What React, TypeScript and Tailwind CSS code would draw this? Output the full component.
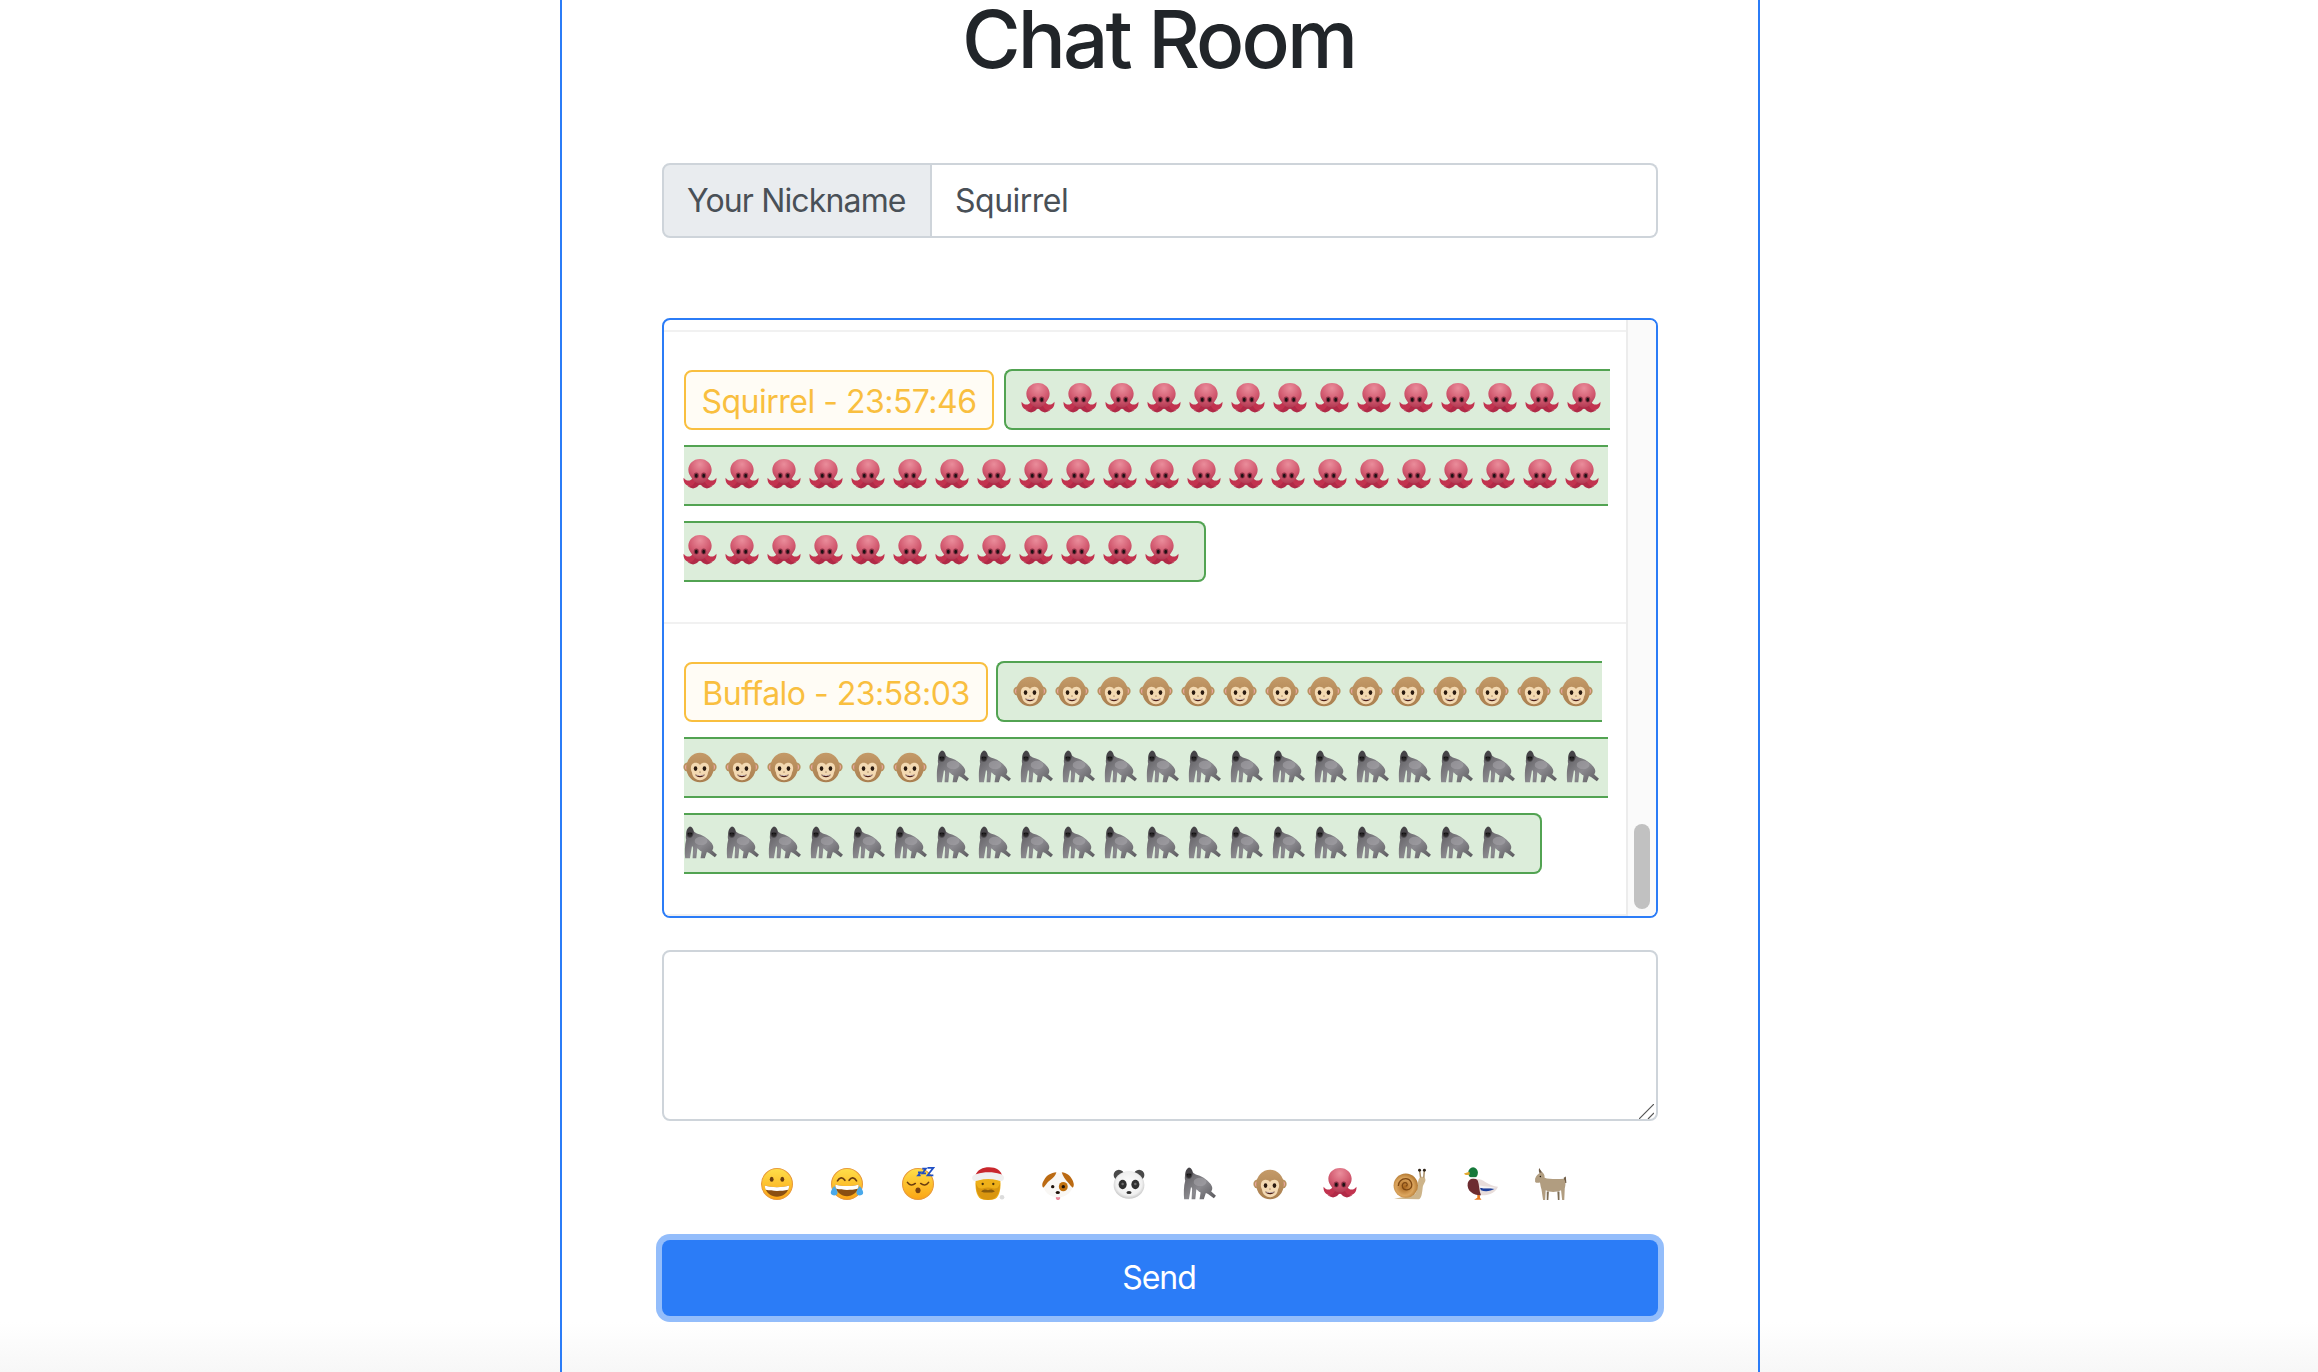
const Octopus = () => (
  <svg viewBox="0 0 32 32" className="block w-8 h-8">
    <defs>
      <radialGradient id="octo" cx="50%" cy="22%" r="78%">
        <stop offset="0%" stopColor="#ea8d9b" />
        <stop offset="60%" stopColor="#d25a70" />
        <stop offset="100%" stopColor="#b23a53" />
      </radialGradient>
    </defs>
    <path d="M9 19 C7 22 3 22 0.5 18.5 C0 23 3 27 8 26.5 C11 26 13 24.5 14 22 Z" fill="#c2334f" />
    <path d="M23 19 C25 22 29 22 31.5 18.5 C32 23 29 27 24 26.5 C21 26 19 24.5 18 22 Z" fill="#c2334f" />
    <path d="M12 21 C11 25 7 28 4 26 C7 29.5 12 29.5 14.5 26 C15.5 25 16.5 25 17.5 26 C20 29.5 25 29.5 28 26 C25 28 21 25 20 21 Z" fill="#b02a47" />
    <path d="M16 0.8 C22.5 0.8 27 5.5 27 11 C27 14.5 25.5 16.5 24 18.5 C22.5 21 20 24 16 24 C12 24 9.5 21 8 18.5 C6.5 16.5 5 14.5 5 11 C5 5.5 9.5 0.8 16 0.8 Z" fill="url(#octo)" />
    <ellipse cx="12.5" cy="16.5" rx="2.4" ry="2.8" fill="#8d3346" />
    <ellipse cx="19.5" cy="16.5" rx="2.4" ry="2.8" fill="#8d3346" />
    <ellipse cx="12.5" cy="16.8" rx="1.3" ry="1.9" fill="#1c1114" />
    <ellipse cx="19.5" cy="16.8" rx="1.3" ry="1.9" fill="#1c1114" />
  </svg>
);

const Monkey = () => (
  <svg viewBox="0 0 32 32" className="block w-8 h-8">
    <defs>
      <linearGradient id="mky" x1="0" y1="0" x2="0" y2="1">
        <stop offset="0%" stopColor="#c49a68" />
        <stop offset="100%" stopColor="#a97f4f" />
      </linearGradient>
    </defs>
    <circle cx="4.5" cy="16" r="4.2" fill="#b8925f" />
    <circle cx="27.5" cy="16" r="4.2" fill="#b8925f" />
    <circle cx="4.5" cy="16" r="2.7" fill="#eba7a0" />
    <circle cx="27.5" cy="16" r="2.7" fill="#eba7a0" />
    <ellipse cx="16" cy="16.5" rx="13" ry="14" fill="url(#mky)" />
    <path d="M16 14 C18 11 24 11 24.5 16 C25 19 24 20 23.5 21.5 C23 26 19.5 28.5 16 28.5 C12.5 28.5 9 26 8.5 21.5 C8 20 7 19 7.5 16 C8 11 14 11 16 14 Z" fill="#f3d9b2" />
    <ellipse cx="11.8" cy="17.5" rx="1.7" ry="2.2" fill="#2a1a10" />
    <ellipse cx="20.2" cy="17.5" rx="1.7" ry="2.2" fill="#2a1a10" />
    <path d="M15 20.5 h2 l-1 1 z" fill="#7d5a38" />
    <path d="M11.5 23 C14 24 18 24 20.5 23 C19.5 26.5 12.5 26.5 11.5 23 Z" fill="#4a1c14" />
    <path d="M12.3 23.3 C14.5 24 17.5 24 19.7 23.3 L19.4 24 C17 24.5 15 24.5 12.6 24 Z" fill="#ffffff" />
  </svg>
);

const Gorilla = () => (
  <svg viewBox="0 0 32 32" className="block w-8 h-8">
    <defs>
      <linearGradient id="gor" x1="0" y1="0" x2="1" y2="1">
        <stop offset="0%" stopColor="#59575b" />
        <stop offset="55%" stopColor="#8b8a8f" />
        <stop offset="100%" stopColor="#57565a" />
      </linearGradient>
    </defs>
    <path d="M7 2 C9 4 11 6 13 7 C18 8 23 11 27 16 C29 19 29 21 27.5 23 L32 27 L30 29.5 L24.5 25.5 L22.5 24.5 L20.5 30.5 L16.5 30.5 L17.5 24 C15.5 23 14.5 22 13.5 21 L12.5 30.5 L9 30.5 L9.5 20.5 L8.5 18.5 L6.5 30.5 L2 30.5 C1.5 25 1.5 18 3 13 C2 9 3 5 7 2 Z" fill="url(#gor)" />
    <ellipse cx="17" cy="14" rx="6" ry="4" fill="#a3a2a7" opacity="0.6" />
    <path d="M6.5 0.5 C9 1 10.5 4 10 6.5 C9.5 9.5 8.5 11 6.5 11 C4.5 11 3 9 3 6.5 C3 4 4.5 1.5 6.5 0.5 Z" fill="#464448" />
    <path d="M4 6.5 C5 5.5 8 5.5 9 6.5 C9 8.5 8 10 6.5 10 C5 10 4 8.5 4 6.5 Z" fill="#2b292a" />
    <circle cx="5.4" cy="7.2" r="0.6" fill="#050505" />
    <circle cx="7.6" cy="7.2" r="0.6" fill="#050505" />
  </svg>
);

const Face = ({ children }: { children: React.ReactNode }) => (
  <svg viewBox="0 0 32 32" className="block w-8 h-8">
    <defs>
      <linearGradient id="face" x1="0" y1="0" x2="0" y2="1">
        <stop offset="0%" stopColor="#ffdf4a" />
        <stop offset="100%" stopColor="#fba414" />
      </linearGradient>
    </defs>
    <circle cx="16" cy="16" r="14.6" fill="url(#face)" stroke="#e89a3b" strokeWidth="1" />
    {children}
  </svg>
);

const Grin = () => (
  <Face>
    <ellipse cx="11" cy="11.5" rx="1.8" ry="2.4" fill="#6b3d10" />
    <ellipse cx="21" cy="11.5" rx="1.8" ry="2.4" fill="#6b3d10" />
    <path d="M4.5 17.5 C11 19.5 21 19.5 27.5 17.5 C27 25 21 28 16 28 C11 28 5 25 4.5 17.5 Z" fill="#8a4f12" />
    <path d="M4.5 17.5 C11 19.5 21 19.5 27.5 17.5 C27.4 19.5 27 21 26.5 21.5 C20 23 12 23 5.5 21.5 C5 21 4.6 19.5 4.5 17.5 Z" fill="#ffffff" />
  </Face>
);

const Joy = () => (
  <svg viewBox="0 0 32 32" className="block w-8 h-8">
    <circle cx="16" cy="16" r="14.6" fill="url(#face)" stroke="#e89a3b" strokeWidth="1" />
    <path d="M7 13 C9 9.5 12 9.5 14 12.5 M18 12.5 C20 9.5 23 9.5 25 13" fill="none" stroke="#6b3d10" strokeWidth="1.6" strokeLinecap="round" />
    <path d="M5 16.5 C11 18.5 21 18.5 27 16.5 C27 24 21 27.5 16 27.5 C11 27.5 5 24 5 16.5 Z" fill="#8a4f12" />
    <path d="M5 16.5 C11 18.5 21 18.5 27 16.5 C27 18.5 26.5 20 26 20.5 C20 22 12 22 6 20.5 C5.5 20 5 18.5 5 16.5 Z" fill="#ffffff" />
    <path d="M4 18 C6 21 7.5 23 7 25 C6.5 27 2.5 27.5 1 25.5 C0 23.5 2 20.5 4 18 Z" fill="#4aa9ea" />
    <path d="M28 18 C26 21 24.5 23 25 25 C25.5 27 29.5 27.5 31 25.5 C32 23.5 30 20.5 28 18 Z" fill="#4aa9ea" />
  </svg>
);

const Sleepy = () => (
  <Face>
    <path d="M6 14.5 C8 17.5 11 17.5 13.5 15.5 M18.5 15.5 C21 17.5 24 17.5 26 14.5" fill="none" stroke="#6b3d10" strokeWidth="1.5" strokeLinecap="round" />
    <ellipse cx="16" cy="22" rx="2.4" ry="2.8" fill="#7a4310" />
    <path d="M16 5 h2.5 l-2.5 3 h2.5 M20 1.5 h3.5 l-3.5 4.5 h3.5 M25 0.8 h5.5 l-5.5 7 h5.5" fill="none" stroke="#1f4fc4" strokeWidth="1.6" />
  </Face>
);

const Santa = () => (
  <svg viewBox="0 0 32 32" className="block w-8 h-8">
    <circle cx="29.2" cy="28.5" r="2.2" fill="#dcdcdc" />
    <path d="M4.5 11 C3.5 20 5 27 9 30 C12 31.5 20 31.5 23 30 C27 27 28.5 20 27.5 11 Z" fill="#eeb019" />
    <path d="M4.5 15 C5 24 7 31 16 31 C25 31 27 24 27.5 15 C26 20 23.5 21 20.5 20 C18 19 14 19 11.5 20 C8.5 21 6 20 4.5 15 Z" fill="#d9960f" />
    <path d="M9.5 23 C12 20.5 14.5 21 16 22 C17.5 21 20 20.5 22.5 23 C20 24.5 12 24.5 9.5 23 Z" fill="#8a5d0c" />
    <circle cx="11" cy="16" r="1.1" fill="#4b3208" />
    <circle cx="21" cy="16" r="1.1" fill="#4b3208" />
    <path d="M4 8 C6 2.5 11 0.3 17 0.3 C24 0.3 28 3.5 29.5 8.5 Z" fill="#c9272d" />
    <path d="M1 10 C1 8 3 7 5.5 6.5 C12 4.5 21 4.5 27.5 6.5 C30 7 31.5 8.5 31 11 C30.5 13.5 27.5 13.5 25 12.5 C19 11 13 11 7.5 12.5 C4.5 13.8 1 13.5 1 10 Z" fill="#f0f0f0" />
  </svg>
);

const Dog = () => (
  <svg viewBox="0 0 32 32" className="block w-8 h-8">
    <path d="M14 26 h4 v3.5 c0 2.2 -4 2.2 -4 0 z" fill="#ec8a9c" />
    <ellipse cx="16" cy="17" rx="13.8" ry="11.5" fill="#f9f7f4" />
    <path d="M14.5 5 C9.5 5.5 5 8 3 12 C1 15 0.5 17.5 2 19.5 C4 18 5.5 14.5 8.5 12.5 C11.5 10.5 13.5 8.5 14.5 5 Z" fill="#bb6a12" />
    <path d="M19.5 5 C24 5.5 27.5 8 29.5 12 C31 15 31.5 17.5 30 19.5 C28 18 27 16 25.5 14.5 C23 12 20.5 8.5 19.5 5 Z" fill="#bb6a12" />
    <ellipse cx="21" cy="18.5" rx="4.2" ry="4.4" fill="#c0700e" />
    <circle cx="11" cy="18.5" r="1.6" fill="#1e1209" />
    <circle cx="21" cy="18.5" r="1.6" fill="#1e1209" />
    <ellipse cx="15.8" cy="24" rx="2" ry="1.5" fill="#1e1209" />
  </svg>
);

const Panda = () => (
  <svg viewBox="0 0 32 32" className="block w-8 h-8">
    <defs>
      <radialGradient id="pan" cx="50%" cy="45%" r="60%">
        <stop offset="0%" stopColor="#ffffff" />
        <stop offset="70%" stopColor="#f0f0f0" />
        <stop offset="100%" stopColor="#b5b5b5" />
      </radialGradient>
    </defs>
    <circle cx="6.5" cy="7.5" r="5" fill="#4a4a4a" />
    <circle cx="25.5" cy="7.5" r="5" fill="#4a4a4a" />
    <ellipse cx="16" cy="17" rx="14.5" ry="13" fill="url(#pan)" />
    <ellipse cx="10" cy="16.5" rx="3.8" ry="4.4" fill="#303030" />
    <ellipse cx="22" cy="16.5" rx="3.8" ry="4.4" fill="#303030" />
    <circle cx="10" cy="16" r="1.2" fill="#6e6e6e" />
    <circle cx="22" cy="16" r="1.2" fill="#6e6e6e" />
    <ellipse cx="16" cy="24" rx="2.4" ry="1.5" fill="#303030" />
  </svg>
);

const Snail = () => (
  <svg viewBox="0 0 32 32" className="block w-8 h-8">
    <defs>
      <radialGradient id="shell" cx="45%" cy="55%" r="60%">
        <stop offset="0%" stopColor="#a9651c" />
        <stop offset="60%" stopColor="#dca65f" />
        <stop offset="100%" stopColor="#a86d26" />
      </radialGradient>
    </defs>
    <path d="M1 30 C7 28 18 29 21 25 C24 21 23 13 24.5 11 C26 8.5 30 8.5 30.5 11.5 C31 14 28.5 16 28 19 C27.5 24 27 30 24 30.5 Z" fill="#cdb48a" />
    <path d="M26 10 L25 3 M29 10 L29.5 3" stroke="#a58a62" strokeWidth="1.4" />
    <circle cx="25" cy="3" r="1.4" fill="#2c2117" />
    <circle cx="29.6" cy="3" r="1.4" fill="#2c2117" />
    <circle cx="12" cy="17.5" r="11.5" fill="url(#shell)" />
    <path d="M12 18 C13.5 18 14 16 12.5 15 C10 14 8 16.5 9 19 C10 22 15 22.5 17 19.5 C19 15.5 16 11 12 11 C8 11 5 14 5 18" fill="none" stroke="#7e4813" strokeWidth="1.2" />
  </svg>
);

const Duck = () => (
  <svg viewBox="0 0 32 32" className="block w-8 h-8">
    <path d="M12.5 25 l0 4 -3 1.8 h7 l-1.5 -1.8 0 -4 z" fill="#ea7a1e" />
    <path d="M4 14 C10 10 16 11 20 14 C24 16.5 28 18 32 18.5 C30 24 24 27 15 26.5 C8 26 3 21 4 14 Z" fill="#e8dddb" />
    <path d="M3.5 15 C5 10 11 9.5 13 13 C14.5 17 14 22 16 26.5 C10 27 2 23 3.5 15 Z" fill="#6d2c30" />
    <path d="M15 19.5 C19 20.5 24 19.5 29 20.5 C25 23 20 23.5 16 22 Z" fill="#1c3f9c" />
    <path d="M15 17.5 C20 18.5 25 18.5 29 19.5 L29 20.5 C24 19.5 19 20.5 15 19.5 Z" fill="#f4f4f4" />
    <ellipse cx="8.5" cy="5.5" rx="4.6" ry="5.2" fill="#15793a" />
    <rect x="5.5" y="9.5" width="6" height="1.4" fill="#f2f2f2" />
    <path d="M5 4.5 L0 6 C1 8 4 7.5 5.5 7 Z" fill="#e3a82d" />
  </svg>
);

const Goat = () => (
  <svg viewBox="0 0 32 32" className="block w-8 h-8">
    <path d="M5 1 C4 3 4.5 5 6 7 L8 5.5 C7 4 6 3 5 1 Z M28 10 L30 9 L30.5 15 L28.5 15 Z" fill="#6f5c47" />
    <path d="M1 11 C2 8 4 6 7 5 C9 5.5 10 7 10 10 C14 11.5 22 11.5 28 11 C30 13 30 17 29 20 L28.5 31 L26.5 31 L25.5 22 C21 24 15 24 11 22 L10.5 31 L8.5 31 L7 21 C6 18 6 15.5 5.5 14.5 C4 15 2 15 1 14 Z" fill="#b19d80" />
    <path d="M14 23 L13.5 31 L12 31 L12 23 Z M24 23 L24 31 L22.5 31 L22 23 Z" fill="#7c6c55" />
    <circle cx="6" cy="9" r="0.7" fill="#20180e" />
  </svg>
);

const Emoji = ({ kind }: { kind: React.FC }) => {
  const Icon = kind;
  return (
    <span className="inline-block w-[42px] h-8 align-middle -translate-y-[3px]">
      <span className="block w-8 scale-[1.06]">
        <Icon />
      </span>
    </span>
  );
};

const repeat = (kind: React.FC, count: number) =>
  Array.from({ length: count }, () => kind);

const messages = [
  {
    label: "Squirrel - 23:57:46",
    width: "w-[310px] mr-[10px]",
    emojis: repeat(Octopus, 48),
  },
  {
    label: "Buffalo - 23:58:03",
    width: "w-[304px] mr-[8px]",
    emojis: [...repeat(Monkey, 20), ...repeat(Gorilla, 36)],
  },
];

const palette = [Grin, Joy, Sleepy, Santa, Dog, Panda, Gorilla, Monkey, Octopus, Snail, Duck, Goat];

const Message = ({ label, width, emojis, last }: (typeof messages)[number] & { last?: boolean }) => (
  <div
    className={
      last
        ? "flex-1 border-y-2 border-[#f1f1f1] pt-[30px] pl-5 pr-4 text-[32px] leading-[76px]"
        : "mt-[10px] border-t-2 border-[#f1f1f1] pt-[30px] pb-8 pl-5 pr-4 text-[32px] leading-[76px]"
    }
  >
    <span
      className={`inline-block ${width} h-[60px] -translate-y-[2px] rounded-lg border-2 border-[#f9bf3f] bg-[#fffcf5] text-center text-[32px] leading-[59px] tracking-[-0.5px] text-[#f9bf3f] align-middle`}
    >
      {label}
    </span>
    <span className="rounded-lg border-2 border-[#52a352] bg-[#dcedda] pl-4 pr-4 py-[8.6px]">
      {emojis.map((kind, i) => (
        <Emoji key={i} kind={kind} />
      ))}
    </span>
  </div>
);

export default function App() {
  return (
    <div className="relative h-[1372px] overflow-hidden bg-white font-['Inter','Liberation_Sans',sans-serif] text-[#212529]">
      <div className="pointer-events-none absolute inset-x-0 bottom-0 h-[50px] bg-gradient-to-b from-transparent to-[#f7f7f7]" />

      <div className="relative ml-[560px] flex h-full w-[1200px] flex-col border-x-2 border-[#2b7cf7] px-[100px]">
        <h1 className="mb-[85px] h-[78px] pr-[3px] text-center text-[80px] font-medium leading-[78px] tracking-[-2.9px]">
          Chat Room
        </h1>

        <div className="mb-20 flex h-[75px] text-[32px] tracking-[-0.5px] text-[#495057]">
          <label className="flex w-[270px] shrink-0 items-center whitespace-nowrap rounded-l-lg border-2 border-[#ced4da] bg-[#e9ecef] px-[23px] tracking-[-0.85px]">
            Your Nickname
          </label>
          <input
            defaultValue="Squirrel"
            className="min-w-0 flex-1 rounded-r-lg border-y-2 border-r-2 border-[#ced4da] bg-white px-[23px] outline-none"
          />
        </div>

        <div className="flex h-[600px] overflow-hidden rounded-lg border-2 border-[#2b7cf7]">
          <div className="flex min-w-0 flex-1 flex-col overflow-hidden">
            {messages.map((m, i) => (
              <Message key={m.label} {...m} last={i === messages.length - 1} />
            ))}
          </div>
          <div className="flex w-[30px] shrink-0 flex-col items-center justify-end border-l-2 border-[#ececec] bg-[#fafafa] pb-[7px]">
            <div className="h-[85px] w-4 rounded-full bg-[#c1c1c1]" />
          </div>
        </div>

        <div className="relative mt-8 h-[171px]">
          <textarea className="block h-full w-full resize-none rounded-lg border-2 border-[#ced4da] bg-white outline-none" />
          <svg viewBox="0 0 15 15" className="absolute bottom-[2px] right-[4px] h-[15px] w-[15px]">
            <path d="M15 0 L0 15 M15 9 L9 15" stroke="#555" strokeWidth="1.2" />
          </svg>
        </div>

        <div className="mt-[47px] flex justify-center gap-[38.4px] pl-2">
          {palette.map((Icon, i) => (
            <button key={i} className="h-8 w-8 shrink-0 scale-[1.06]">
              <Icon />
            </button>
          ))}
        </div>

        <button className="mt-10 h-[76px] w-full shrink-0 rounded-lg bg-[#2b7cf7] pr-[2px] text-[32px] tracking-[-1px] text-white ring-[6px] ring-[#93bdfb]">
          Send
        </button>
      </div>
    </div>
  );
}
